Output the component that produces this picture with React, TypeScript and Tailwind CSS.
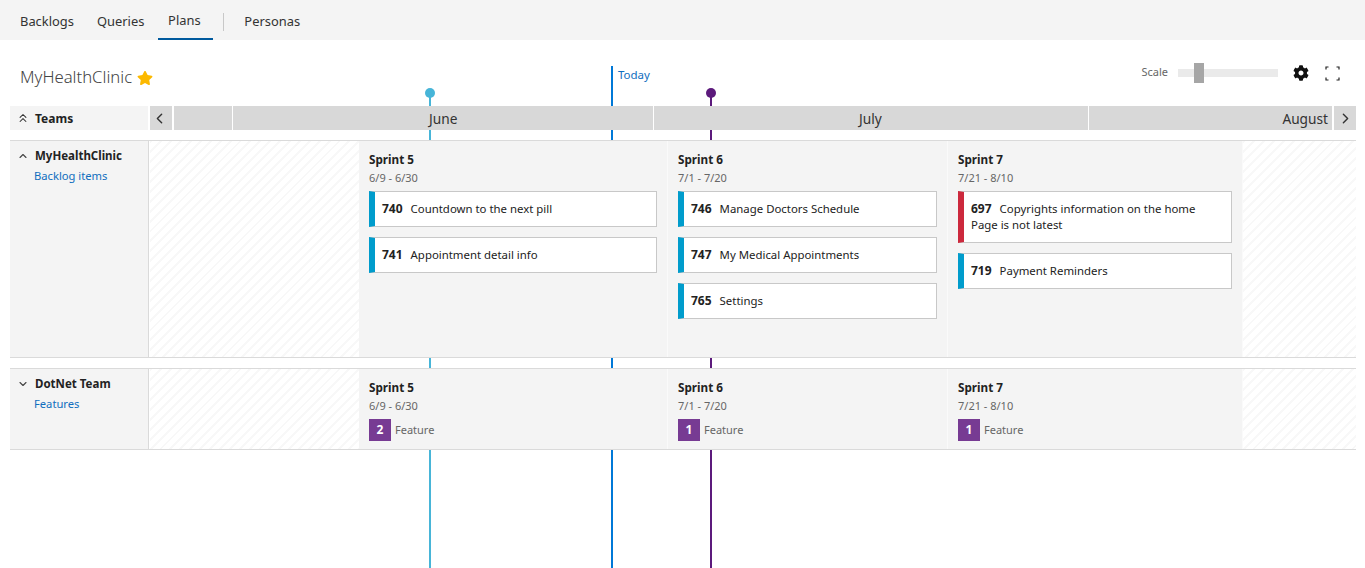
import React from "react";
import { ChevronLeft, ChevronRight, ChevronUp, ChevronDown, ChevronsUp } from "lucide-react";
import { FaCog, FaStar } from "react-icons/fa";

const stripes =
  "bg-[repeating-linear-gradient(135deg,#f8f8f8_0px,#f8f8f8_2px,#ffffff_2px,#ffffff_7px)]";

type Card = { id: number; title: string; second?: string; color?: string };
type Sprint = { name: string; dates: string; width: string; cards?: Card[]; count?: number };

const myHealthSprints: Sprint[] = [
  {
    name: "Sprint 5",
    dates: "6/9 - 6/30",
    width: "w-[309px]",
    cards: [
      { id: 740, title: "Countdown to the next pill" },
      { id: 741, title: "Appointment detail info" },
    ],
  },
  {
    name: "Sprint 6",
    dates: "7/1 - 7/20",
    width: "w-[280px]",
    cards: [
      { id: 746, title: "Manage Doctors Schedule" },
      { id: 747, title: "My Medical Appointments" },
      { id: 765, title: "Settings" },
    ],
  },
  {
    name: "Sprint 7",
    dates: "7/21 - 8/10",
    width: "w-[295px]",
    cards: [
      { id: 697, title: "Copyrights information on the home", second: "Page is not latest", color: "red" },
      { id: 719, title: "Payment Reminders" },
    ],
  },
];

const dotNetSprints: Sprint[] = [
  { name: "Sprint 5", dates: "6/9 - 6/30", width: "w-[309px]", count: 2 },
  { name: "Sprint 6", dates: "7/1 - 7/20", width: "w-[280px]", count: 1 },
  { name: "Sprint 7", dates: "7/21 - 8/10", width: "w-[295px]", count: 1 },
];

function WorkItem({ card }: { card: Card }) {
  return (
    <div
      className={`bg-white border border-[#c8c8c8] border-l-[6px] ${
        card.color === "red" ? "border-l-[#cc293d]" : "border-l-[#009ccc]"
      } pl-[7px] text-[11.4px] text-[#222] leading-4 ${card.second ? "h-[52px] py-[9px]" : "h-9 py-[9px]"}`}
    >
      <span className="text-[12px] font-bold mr-[8px]">{card.id}</span>
      {card.title}
      {card.second && <div>{card.second}</div>}
    </div>
  );
}

function SprintColumn({ sprint }: { sprint: Sprint }) {
  return (
    <div className={`${sprint.width} bg-[#f4f4f4] border-r border-[#fafafa] pl-[10px] pr-[10px] pt-[9px]`}>
      <div className="text-[11.7px] font-bold text-[#222] leading-[18px]">{sprint.name}</div>
      <div className="text-[11px] text-[#666] leading-4 mt-[2px]">{sprint.dates}</div>
      {sprint.cards && (
        <div className="flex flex-col gap-[10px] mt-[5px]">
          {sprint.cards.map((c) => (
            <WorkItem key={c.id} card={c} />
          ))}
        </div>
      )}
      {sprint.count !== undefined && (
        <div className="flex items-center gap-1 mt-[5px]">
          <div className="w-[22px] h-[22px] bg-[#773b93] text-white text-[12px] font-bold flex items-center justify-center">
            {sprint.count}
          </div>
          <span className="text-[11px] text-[#666]">Feature</span>
        </div>
      )}
    </div>
  );
}

function TeamRow({
  name,
  link,
  open,
  height,
  sprints,
}: {
  name: string;
  link: string;
  open: boolean;
  height: string;
  sprints: Sprint[];
}) {
  return (
    <div className={`relative z-10 bg-white flex ${height} border-t border-b border-[#dadada]`}>
      <div className="w-[139px] shrink-0 bg-[#f4f4f4] border-r border-[#dadada] pt-[6px] flex">
        <div className="w-[25px] pt-[3px] pl-[7px] text-[#444]">
          {open ? <ChevronUp size={12} strokeWidth={2.2} /> : <ChevronDown size={12} strokeWidth={2.2} />}
        </div>
        <div>
          <div className="text-[11.5px] font-bold text-[#222] leading-[18px]">{name}</div>
          <div className="text-[11.2px] text-[#106ebe] leading-4 mt-[3px] -ml-px">{link}</div>
        </div>
      </div>
      <div className={`w-[209px] ml-px shrink-0 ${stripes}`} />
      {sprints.map((s) => (
        <SprintColumn key={s.name} sprint={s} />
      ))}
      <div className={`flex-1 ${stripes}`} />
    </div>
  );
}

export default function App() {
  return (
    <div className="relative h-[568px] overflow-hidden bg-white font-['Noto_Sans',sans-serif]">
      {/* Nav */}
      <div className="h-10 bg-[#f4f4f4] flex items-center text-[12.9px] text-[#333]">
        <div className="flex items-center h-10 ml-[10px]">
          <a className="px-[10px] mr-[3px] pt-[3px]">Backlogs</a>
          <a className="px-[10px] pt-[3px]">Queries</a>
          <a className="h-10 flex items-center justify-center w-[55px] ml-[4px] pt-[3px] pr-[3px] border-b-[2px] border-[#005a9e] text-[#333]">
            Plans
          </a>
          <div className="w-px h-[18px] bg-[#c8c8c8] ml-[10px] mr-[20px] mt-[3px]" />
          <a className="pt-[3px]">Personas</a>
        </div>
      </div>

      {/* Title row */}
      <div className="h-[66px] flex px-5">
        <div className="flex items-center h-[75px] text-[16.7px] font-light text-[#444] leading-none">
          MyHealthClinic
          <FaStar className="ml-[5px] text-[#fcb900]" size={16} />
        </div>
        <div className="ml-auto flex items-center h-[66px] mr-[5px]">
          <span className="text-[11px] text-[#666] mr-[10px] pb-[2px]">Scale</span>
          <div className="relative w-[100px] h-2 bg-[#eaeaea]">
            <div className="absolute left-4 top-[-6px] w-[10px] h-5 bg-[#a6a6a6]" />
          </div>
          <FaCog className="ml-[15px] text-[#111]" size={16} />
          <svg className="ml-[16px]" width="15" height="15" viewBox="0 0 15 15" fill="none" stroke="#222" strokeWidth="1.2">
            <path d="M1 3.5V1h2.5M11.5 1H14v2.5M14 11.500V14h-2.500M3.500 14H1v-2.500" />
          </svg>
        </div>
      </div>

      {/* Timeline */}
      <div className="mx-[10px] w-[1346px]">
        <div className="relative z-10 flex h-6 gap-[2px]">
          <div className="w-[138px] bg-[#f4f4f4] flex items-center text-[12px] font-bold text-[#222] pt-[2px]">
            <ChevronsUp size={14} strokeWidth={1.8} className="ml-[6px] mr-[5px] -mt-[2px] text-[#333]" />
            Teams
          </div>
          <div className="w-[22px] bg-[#d8d8d8] flex items-center justify-center text-[#333] pr-[3px]">
            <ChevronLeft size={17} />
          </div>
          <div className="flex-1 flex gap-px text-[13.7px] text-[#333]">
            <div className="w-[58px] bg-[#d8d8d8]" />
            <div className="w-[420px] bg-[#d8d8d8] pl-[196px] leading-[26px]">June</div>
            <div className="w-[434px] bg-[#d8d8d8] pl-[205px] leading-[26px]">July</div>
            <div className="flex-1 bg-[#d8d8d8] text-right pr-[4px] leading-[26px]">August</div>
          </div>
          <div className="w-[22px] bg-[#d8d8d8] flex items-center justify-center text-[#333]">
            <ChevronRight size={17} />
          </div>
        </div>

        <div className="mt-[10px]">
          <TeamRow name="MyHealthClinic" link="Backlog items" open height="h-[218px]" sprints={myHealthSprints} />
        </div>
        <div className="mt-[10px]">
          <TeamRow name="DotNet Team" link="Features" open={false} height="h-[82px]" sprints={dotNetSprints} />
        </div>
      </div>

      {/* Markers lie behind the rows */}
      <div className="absolute left-[429px] top-[93px] bottom-0 w-[2px] bg-[#47b5d8]" />
      <div className="absolute left-[425px] top-[88px] w-[10px] h-[10px] rounded-full bg-[#47b5d8]" />
      <div className="absolute left-[611px] top-[66px] bottom-0 w-[2px] bg-[#0078d7]" />
      <div className="absolute left-[618px] top-[66px] text-[11.5px] text-[#106ebe]">Today</div>
      <div className="absolute left-[710px] top-[93px] bottom-0 w-[2px] bg-[#5c1a7c]" />
      <div className="absolute left-[706px] top-[88px] w-[10px] h-[10px] rounded-full bg-[#5c1a7c]" />
    </div>
  );
}
